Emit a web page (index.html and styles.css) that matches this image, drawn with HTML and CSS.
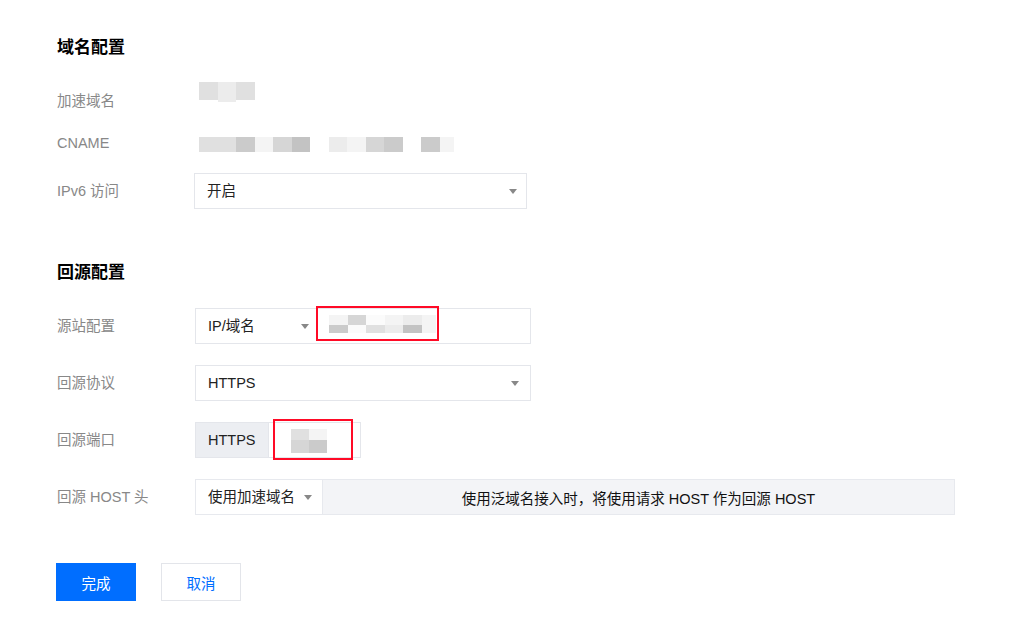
FILE: index.html
```html
<!DOCTYPE html>
<html lang="zh-CN">
<head>
<meta charset="utf-8">
<title>域名配置</title>
<link rel="stylesheet" href="styles.css">
</head>
<body>
<div class="page">
  <h2 class="section-title">域名配置</h2>

  <div class="row static first">
    <div class="label">加速域名</div>
    <div class="mosaic mosaic-domain">
      <i class="s3"></i><i class="s2 tall"></i><i class="s3"></i>
    </div>
  </div>

  <div class="row static second">
    <div class="label">CNAME</div>
    <div class="mosaic mosaic-cname">
      <i class="s3"></i><i class="s3"></i><i class="s5"></i><i class="s1"></i><i class="s4"></i><i class="s6"></i><i></i><i class="s2"></i><i class="s1"></i><i class="s4"></i><i class="s5"></i><i></i><i class="s5"></i><i class="s1 narrow"></i>
    </div>
  </div>

  <div class="row field-row ipv6">
    <div class="label">IPv6 访问</div>
    <div class="select select-ipv6">
      <span class="value">开启</span>
      <span class="caret"></span>
    </div>
  </div>

  <h2 class="section-title second-title">回源配置</h2>

  <div class="row field-row origin">
    <div class="label">源站配置</div>
    <div class="combo">
      <div class="combo-select">
        <span class="value">IP/域名</span>
        <span class="caret"></span>
      </div>
      <div class="combo-input">
        <div class="mosaic mosaic-origin">
          <i class="s1"></i><i class="s4"></i><i class="s0"></i><i class="s1"></i><i class="s2"></i><i class="s1 narrow"></i>
          <i class="s5"></i><i class="s0"></i><i class="s3"></i><i class="s2"></i><i class="s6"></i><i class="s1 narrow"></i>
        </div>
      </div>
      <span class="mark mark-origin"></span>
    </div>
  </div>

  <div class="row field-row">
    <div class="label">回源协议</div>
    <div class="select select-protocol">
      <span class="value">HTTPS</span>
      <span class="caret"></span>
    </div>
  </div>

  <div class="row field-row">
    <div class="label">回源端口</div>
    <div class="port">
      <div class="addon">HTTPS</div>
      <div class="port-input">
        <div class="mosaic mosaic-port">
          <i class="s3"></i><i class="s1"></i>
          <i class="s4"></i><i class="s5"></i>
        </div>
      </div>
      <span class="mark mark-port"></span>
    </div>
  </div>

  <div class="row field-row">
    <div class="label">回源 HOST 头</div>
    <div class="host">
      <div class="host-select">
        <span class="value">使用加速域名</span>
        <span class="caret"></span>
      </div>
      <div class="host-desc">使用泛域名接入时，将使用请求 HOST 作为回源 HOST</div>
    </div>
  </div>

  <div class="actions">
    <button class="btn btn-primary">完成</button>
    <button class="btn btn-default">取消</button>
  </div>
</div>
</body>
</html>
```

FILE: styles.css
```css
* { box-sizing: border-box; }

html, body {
  margin: 0;
  padding: 0;
  background: #ffffff;
}

body {
  font-family: "Liberation Sans", "Noto Sans CJK SC", sans-serif;
  font-size: 14.5px;
  color: #222222;
}

.page {
  padding: 36px 0 0 57px;
}

.section-title {
  margin: 0;
  font-size: 17px;
  line-height: 24px;
  font-weight: bold;
  color: #000000;
}

.second-title {
  margin-top: 52px;
}

.row {
  display: flex;
  align-items: center;
}

.label {
  width: 138px;
  flex: none;
  color: #888888;
  font-size: 14.5px;
  line-height: 22px;
}

.static {
  height: 22px;
  align-items: flex-start;
}

.static.first {
  margin-top: 30px;
}

.static.second {
  margin-top: 20px;
}

.field-row {
  height: 36px;
  margin-top: 21px;
}

.field-row.ipv6 {
  margin-top: 19px;
}

.field-row.ipv6 .label {
  width: 137px;
}

.field-row.origin {
  margin-top: 23px;
}

/* pixelated placeholders */
.mosaic {
  display: grid;
  grid-auto-flow: column;
  grid-auto-columns: 18.5px;
}

.mosaic i {
  display: block;
}

.mosaic i.narrow {
  width: 14px;
}

.mosaic i.tall {
  margin-bottom: -2px;
}

.s0 { background: #fbfbfb; }
.s1 { background: #f4f4f4; }
.s2 { background: #ececec; }
.s3 { background: #e0e0e0; }
.s4 { background: #d6d6d6; }
.s5 { background: #cbcbcb; }
.s6 { background: #c3c3c3; }

.mosaic-domain {
  height: 18px;
  margin: -8px 0 0 4px;
}

.mosaic-cname {
  height: 15px;
  margin: 5px 0 0 4px;
}

.mosaic-origin {
  grid-auto-flow: row;
  grid-template-columns: repeat(5, 18.5px) 12px;
  grid-template-rows: 10px 8px;
  margin: -4px 0 0 13px;
}

.mosaic-port {
  grid-auto-flow: row;
  grid-template-columns: 18px 18px;
  grid-template-rows: 11px 13px;
  margin: 2px 0 0 22px;
}

/* selects */
.value {
  color: #222222;
  line-height: 20px;
}

.caret {
  width: 0;
  height: 0;
  border-top: 5px solid #888888;
  border-left: 4.5px solid transparent;
  border-right: 4.5px solid transparent;
}

.select {
  height: 36px;
  display: flex;
  align-items: center;
  justify-content: space-between;
  border: 1px solid #e4e6eb;
  background: #ffffff;
  padding: 0 10px 0 12px;
}

.select-ipv6 {
  width: 333px;
  padding-right: 9px;
}

.select-protocol {
  width: 336px;
  padding-right: 11px;
}

.combo {
  position: relative;
  width: 336px;
  height: 36px;
  display: flex;
  border: 1px solid #e4e6eb;
}

.combo-select {
  width: 120px;
  flex: none;
  display: flex;
  align-items: center;
  justify-content: space-between;
  padding: 0 7px 0 12px;
}

.combo-input {
  flex: 1;
  display: flex;
  align-items: center;
}

.port {
  position: relative;
  width: 166px;
  height: 36px;
  display: flex;
  border: 1px solid #e4e6eb;
}

.addon {
  width: 73px;
  flex: none;
  display: flex;
  align-items: center;
  padding-left: 12px;
  background: #eceef2;
  color: #222222;
  border-right: 1px solid #e4e6eb;
}

.port-input {
  flex: 1;
  display: flex;
  align-items: center;
}

.host {
  width: 760px;
  height: 36px;
  display: flex;
  border: 1px solid #e7e9ee;
}

.host-select {
  width: 127px;
  flex: none;
  display: flex;
  align-items: center;
  justify-content: space-between;
  padding: 0 10px 0 12px;
  background: #ffffff;
  border-right: 1px solid #e7e9ee;
}

.host-desc {
  flex: 1;
  display: flex;
  align-items: center;
  justify-content: center;
  background: #f3f4f7;
  color: #111111;
  font-size: 14.5px;
}

/* red annotation boxes drawn over the fields */
.mark {
  position: absolute;
  border: 2px solid #ff0a26;
  pointer-events: none;
}

.mark-origin {
  left: 120px;
  top: -3px;
  width: 123px;
  height: 35px;
}

.mark-port {
  left: 77px;
  top: -4px;
  width: 80px;
  height: 41px;
}

/* buttons */
.actions {
  display: flex;
  gap: 25px;
  margin: 48px 0 0 -1px;
}

.btn {
  width: 80px;
  height: 38px;
  font-family: "Liberation Sans", "Noto Sans CJK SC", sans-serif;
  font-size: 14.5px;
  cursor: pointer;
  padding: 0;
}

.btn-primary {
  background: #006eff;
  border: 1px solid #006eff;
  color: #ffffff;
}

.btn-default {
  background: #ffffff;
  border: 1px solid #e3e5ea;
  color: #006eff;
}
```
